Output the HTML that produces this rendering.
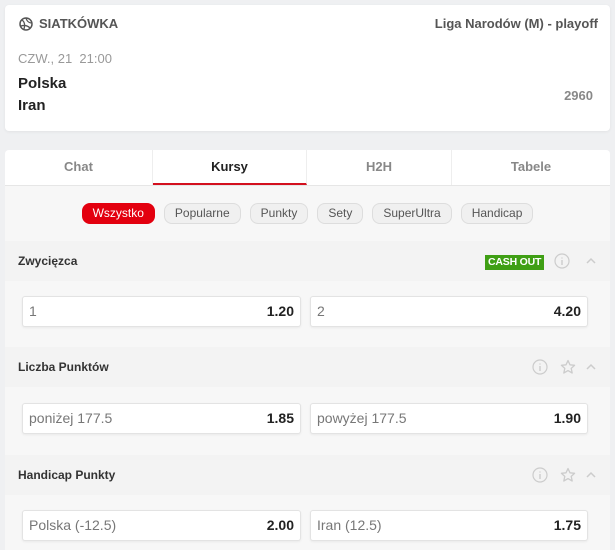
<!DOCTYPE html>
<html><head><meta charset="utf-8"><style>
*{box-sizing:border-box;margin:0;padding:0}
body{width:615px;height:548px;overflow:hidden;background:#eff0f2;font-family:"Liberation Sans",sans-serif;color:#222;position:relative}
.card{position:absolute;left:5px;top:5px;width:605px;height:126px;background:#fff;border-radius:4px;box-shadow:0 1px 3px rgba(0,0,0,.06)}
.sport{position:absolute;left:14px;top:11px;font-size:13px;font-weight:bold;color:#555;display:flex;align-items:center;gap:6px}
.league{position:absolute;right:12px;top:11px;font-size:13px;font-weight:bold;color:#555}
.date{position:absolute;left:13px;top:46px;font-size:13px;color:#999}
.team{position:absolute;left:13px;font-size:15px;font-weight:bold;color:#222}
.num{position:absolute;right:17px;top:83px;font-size:13px;font-weight:bold;color:#888}
.main{position:absolute;left:5px;top:150px;width:605px;height:400px;background:#f7f7f7;border-radius:4px 4px 0 0}
.tabs{height:36px;background:#fff;display:flex;border-bottom:1px solid #e6e6e6;border-radius:4px 4px 0 0}
.tab{font-size:13px;font-weight:bold;color:#888;text-align:center;line-height:34px;border-right:1px solid #eee}
.tab.a{color:#222;border-bottom:2px solid #d3101e}
.pills{position:absolute;top:53px;left:0;width:605px;display:flex;justify-content:center;gap:9px}
.pill{height:21px;line-height:19px;padding:0 10px;border:1px solid #ddd;background:#f0f0f0;border-radius:8px;font-size:12px;color:#555}
.pill.r{background:#e3000f;color:#fff;border-color:#e3000f}
.hdr{position:absolute;left:0;width:605px;height:40px;background:#f3f3f3;font-size:12px;font-weight:bold;color:#333;padding-left:13px;line-height:40px}
.box{position:absolute;height:31px;background:#fff;border:1px solid #e3e3e3;border-radius:3px;box-shadow:0 1px 2px rgba(0,0,0,.06);font-size:14px;color:#777;line-height:29px;padding:0 6px}
.box b{position:absolute;right:6px;top:0;color:#222;font-size:14px}
.ic{position:absolute;top:12px}
.co{position:absolute;left:480px;background:#3f9f14;color:#fff;font-size:10.5px;font-weight:bold;padding:0 3px;height:15px;line-height:15px;top:14px;white-space:nowrap;letter-spacing:-.2px}
</style></head><body>
<div class="card">
<div class="sport"><svg width="14" height="14" viewBox="0 0 14 14"><circle cx="7" cy="7" r="6" fill="none" stroke="#555" stroke-width="1.5"/><path d="M3 3c3 2 3 6 2 9M7 1c1 4 4 5 6 5M2 9c3-1 6-1 9 2" fill="none" stroke="#555" stroke-width="1.3"/></svg>SIATKÓWKA</div>
<div class="league">Liga Narodów (M) - playoff</div>
<div class="date">CZW., 21&nbsp; 21:00</div>
<div class="team" style="top:70px">Polska</div>
<div class="team" style="top:92px">Iran</div>
<div class="num">2960</div>
</div>
<div class="main">
<div class="tabs"><div class="tab" style="width:148px">Chat</div><div class="tab a" style="width:154px">Kursy</div><div class="tab" style="width:145px">H2H</div><div class="tab" style="width:158px;border:0">Tabele</div></div>
<div class="pills"><span class="pill r">Wszystko</span><span class="pill">Popularne</span><span class="pill">Punkty</span><span class="pill">Sety</span><span class="pill">SuperUltra</span><span class="pill">Handicap</span></div>
<div class="hdr" style="top:91px">Zwycięzca<span class="co">CASH OUT</span>
<svg class="ic" style="left:549px" width="16" height="16" viewBox="0 0 16 16"><circle cx="8" cy="8" r="7" fill="none" stroke="#ccc" stroke-width="1.2"/><path d="M8 7v5M8 4.5v1" stroke="#ccc" stroke-width="1.4"/></svg>
<svg class="ic" style="left:580px" width="12" height="16" viewBox="0 0 12 16"><path d="M2 10l4-4 4 4" fill="none" stroke="#ccc" stroke-width="1.5"/></svg></div>
<div class="box" style="left:17px;top:146px;width:279px">1<b>1.20</b></div>
<div class="box" style="left:305px;top:146px;width:278px">2<b>4.20</b></div>
<div class="hdr" style="top:197px">Liczba Punktów
<svg class="ic" style="left:527px" width="16" height="16" viewBox="0 0 16 16"><circle cx="8" cy="8" r="7" fill="none" stroke="#ccc" stroke-width="1.2"/><path d="M8 7v5M8 4.5v1" stroke="#ccc" stroke-width="1.4"/></svg>
<svg class="ic" style="left:555px" width="16" height="16" viewBox="0 0 16 16"><path d="M8 1.5l2 4.3 4.6.5-3.4 3.1 1 4.6L8 11.6 3.8 14l1-4.6L1.4 6.3l4.6-.5z" fill="none" stroke="#ccc" stroke-width="1.3" stroke-linejoin="round"/></svg>
<svg class="ic" style="left:580px" width="12" height="16" viewBox="0 0 12 16"><path d="M2 10l4-4 4 4" fill="none" stroke="#ccc" stroke-width="1.5"/></svg></div>
<div class="box" style="left:17px;top:253px;width:279px">poniżej 177.5<b>1.85</b></div>
<div class="box" style="left:305px;top:253px;width:278px">powyżej 177.5<b>1.90</b></div>
<div class="hdr" style="top:305px">Handicap Punkty
<svg class="ic" style="left:527px" width="16" height="16" viewBox="0 0 16 16"><circle cx="8" cy="8" r="7" fill="none" stroke="#ccc" stroke-width="1.2"/><path d="M8 7v5M8 4.5v1" stroke="#ccc" stroke-width="1.4"/></svg>
<svg class="ic" style="left:555px" width="16" height="16" viewBox="0 0 16 16"><path d="M8 1.5l2 4.3 4.6.5-3.4 3.1 1 4.6L8 11.6 3.8 14l1-4.6L1.4 6.3l4.6-.5z" fill="none" stroke="#ccc" stroke-width="1.3" stroke-linejoin="round"/></svg>
<svg class="ic" style="left:580px" width="12" height="16" viewBox="0 0 12 16"><path d="M2 10l4-4 4 4" fill="none" stroke="#ccc" stroke-width="1.5"/></svg></div>
<div class="box" style="left:17px;top:360px;width:279px">Polska (-12.5)<b>2.00</b></div>
<div class="box" style="left:305px;top:360px;width:278px">Iran (12.5)<b>1.75</b></div>
</div>
</body></html>
